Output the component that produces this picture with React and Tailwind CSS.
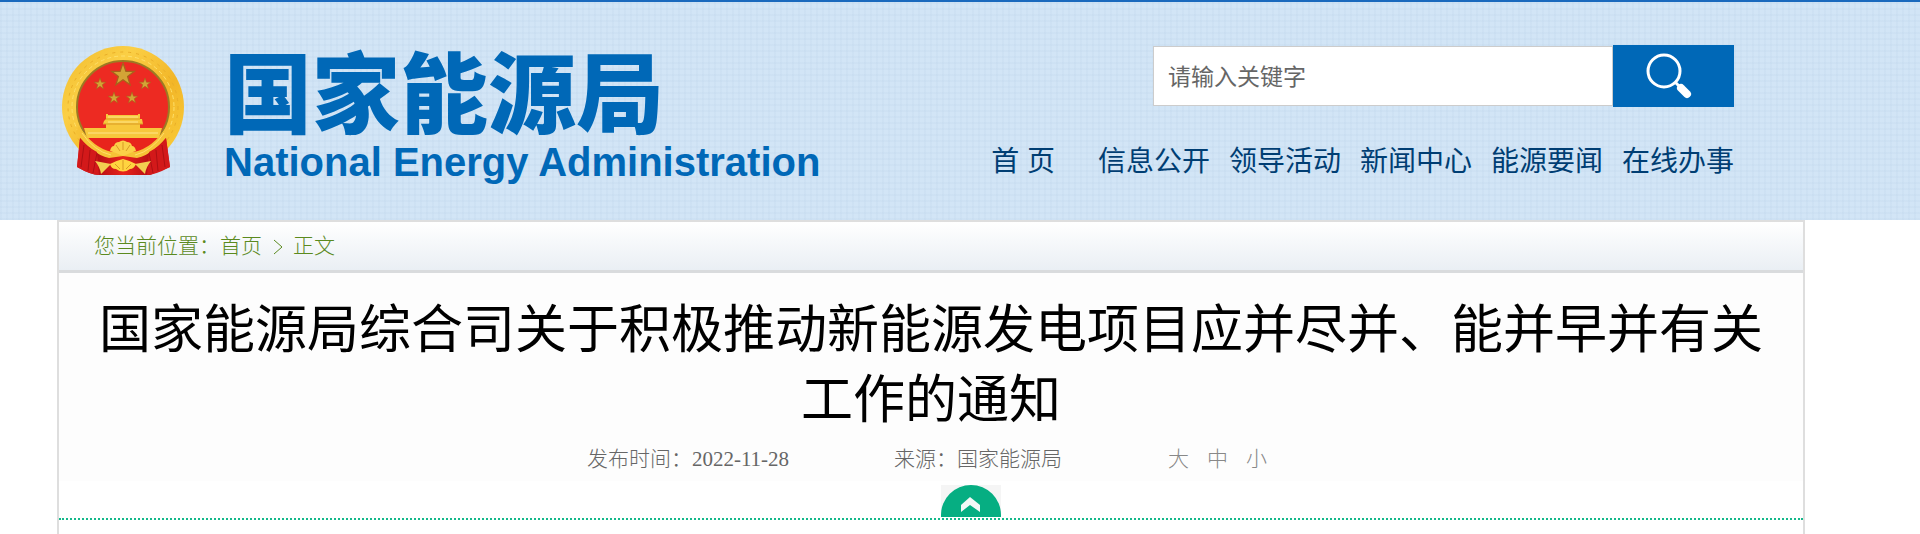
import React from 'react';

const navItems = ['信息公开', '领导活动', '新闻中心', '能源要闻', '在线办事'];
const textSizes = ['大', '中', '小'];
const smallStars = [
  { x: 38, y: 38, s: 6 },
  { x: 83, y: 38, s: 6 },
  { x: 52, y: 52, s: 6 },
  { x: 70, y: 52, s: 6 },
];

function Star({ x, y, s }) {
  return (
    <path
      transform={`translate(${x} ${y}) scale(${s})`}
      d="M0-1 .24-.31.95-.31.38.12.59.81 0 .39-.59.81-.38.12-.95-.31-.24-.31Z"
      fill="#d3a436"
      stroke="#a5641b"
      strokeWidth=".1"
    />
  );
}

function Emblem() {
  return (
    <svg viewBox="0 0 122 130" className="h-[130px] w-[122px] shrink-0" aria-hidden="true">
      <defs>
        <linearGradient id="gold" x1="0" y1="0" x2="1" y2="1">
          <stop offset="0" stopColor="#f0bb2c" />
          <stop offset=".3" stopColor="#fbcf45" />
          <stop offset=".6" stopColor="#f2b628" />
          <stop offset="1" stopColor="#fbd03c" />
        </linearGradient>
        <linearGradient id="drape" x1="0" y1="0" x2="1" y2="0">
          <stop offset="0" stopColor="#e01f1c" />
          <stop offset=".2" stopColor="#b30d12" />
          <stop offset=".5" stopColor="#e8241c" />
          <stop offset=".8" stopColor="#b30d12" />
          <stop offset="1" stopColor="#e01f1c" />
        </linearGradient>
      </defs>
      <circle cx="61" cy="61" r="61" fill="url(#gold)" />
      <circle cx="61" cy="61" r="55" fill="none" stroke="#e9ae28" strokeWidth="1" strokeDasharray="3 5" />
      <circle cx="61" cy="61" r="51" fill="none" stroke="#ffe06a" strokeWidth="1" strokeDasharray="4 3" />
      <circle cx="61" cy="61" r="46" fill="#ed2a22" stroke="#9c7a24" strokeWidth="2" />
      <Star x={61} y={29} s={12} />
      {smallStars.map((star) => (
        <Star key={star.x} {...star} />
      ))}
      <path d="M44 68h2v1h30v-1h2v5h2l1 5h-3v4h22l-3 10H25l-3-10h22v-4h-3l1-3 2-2Z" fill="#f7c83c" />
      <path d="M44 73h34M41 78h40" stroke="#d99a24" strokeWidth="1" />
      <path d="M46 71h30M46 76h30M26 87h70" stroke="#ffe58a" strokeWidth="1" />
      <path d="M25 92h72q-10 13-24 17l-12-5-12 5Q34 104 25 92Z" fill="#e8241c" />
      <path d="M18 92q12 14 31 18h24q19-4 31-18l4 29q-8 3-20 8H37q-8 0-22-8Z" fill="url(#drape)" />
      <path d="M17 80q14 22 33 26l11-1 11 1q19-4 33-26l3 6q-15 22-33 26l-14-2-14 2Q29 108 14 86Z" fill="#f6c236" />
      <path d="M20 87q12 18 29 22m53-22q-12 18-29 22" fill="none" stroke="#ffdf6a" strokeWidth="1" />
      <path d="M18 92q7 9 17 14l2 23q-8 0-22-8Zm86 0q-7 9-17 14l-2 23q8 0 23-8Z" fill="#d3191a" />
      <path d="M22 99l-3 22m9-17-2 21m9-18-4 20m69-28 3 22m-9-17 2 21m-9-18 4 20" stroke="#ad1013" strokeWidth="1" />
      <path d="M48 105q1-5 4-5 1-4 5-4 4-3 8 0 4 0 5 4 3 0 4 5l-6 2-7 3-7-3Z" fill="#fbd048" />
      <path d="M54 99l4 6m3-9v8m7-5-4 6" stroke="#d99a24" strokeWidth="1" />
      <path d="M33 115l16 3-10 10q-1-7-6-13Zm56 0-16 3 10 10q1-7 6-13Z" fill="#f2cf50" />
      <path d="M48 118q5-3 13-5 8 2 13 5-2 5-6 5-7 5-14 0-5 0-6-5Z" fill="#ffd440" />
      <path d="M53 118l5 5m3-9v10m8-6-5 5" stroke="#d99a24" strokeWidth="1" />
    </svg>
  );
}

function SearchIcon() {
  return (
    <svg viewBox="0 0 46 46" className="h-[46px] w-[46px]" fill="none" stroke="white" aria-hidden="true">
      <circle cx="18" cy="18" r="16" strokeWidth="3" />
      <path d="m29 29 4 4" strokeWidth="3" />
      <path d="m35 35 6 6" strokeWidth="8" strokeLinecap="round" />
    </svg>
  );
}

function Header() {
  return (
    <header className="flex h-[220px] justify-between border-t-2 border-[#1a69bd] bg-[#d2e5f6] bg-[repeating-linear-gradient(0deg,#b4cce426_0_2px,transparent_2px_6px),repeating-linear-gradient(90deg,#b4cce426_0_2px,transparent_2px_6px)] pr-[186px] pl-[62px]">
      <div className="flex gap-10 pt-11">
        <Emblem />
        <div className="text-[#0068b7]">
          <div className="h-[92px] text-[88px] leading-[100px] font-black">国家能源局</div>
          <div className="text-[40px] leading-12 font-bold">National Energy Administration</div>
        </div>
      </div>
      <div className="flex flex-col items-end pt-[43px]">
        <form className="flex items-center" onSubmit={(e) => e.preventDefault()}>
          <input
            type="text"
            aria-label="请输入关键字"
            placeholder="请输入关键字"
            className="h-[60px] w-[460px] border border-[#ccc] bg-white px-3.5 pt-0.5 text-[23px] outline-none placeholder:text-[#666]"
          />
          <button type="submit" aria-label="搜索" className="flex h-[62px] w-[121px] items-center justify-center bg-[#0068b7] pr-2.5">
            <SearchIcon />
          </button>
        </form>
        <nav className="mt-[31px] flex gap-[19px] text-[28px] leading-12 text-[#003e73]">
          <a href="#" className="mr-6 whitespace-pre">首 页</a>
          {navItems.map((item) => (
            <a key={item} href="#">{item}</a>
          ))}
        </nav>
      </div>
    </header>
  );
}

export default function App() {
  return (
    <div className="min-h-screen bg-white font-['Liberation_Sans','Noto_Sans_CJK_SC',sans-serif]">
      <Header />
      <main className="mr-[115px] ml-[57px] border-2 border-b-0 border-[#dedede]">
        <nav className="flex h-[51px] items-center border-b-3 border-[#d9dbdd] bg-linear-to-b from-white to-[#eaeff4] px-[35px] text-[21px] font-light text-[#5b8a1e]">
          <span>您当前位置：</span>
          <a href="#">首页</a>
          <svg viewBox="0 0 31 20" className="h-5 w-[31px]" fill="none" stroke="currentColor" aria-hidden="true">
            <path d="m12 4 8 7-8 7" />
          </svg>
          <span>正文</span>
        </nav>
        <div className="bg-[#fdfdfd] px-8 pt-[22px]">
          <h1 className="text-center text-[52px] leading-[70px] text-black">
            国家能源局综合司关于积极推动新能源发电项目应并尽并、能并早并有关工作的通知
          </h1>
          <div className="flex h-[46px] items-center justify-center pt-1 pr-2 font-['Liberation_Serif','Noto_Sans_CJK_SC',serif] text-[21px] font-light text-[#666]">
            <span className="mr-[105px]">发布时间：2022-11-28</span>
            <span className="mr-[106px]">来源：国家能源局</span>
            <div className="flex gap-[18px] text-[#888]">
              {textSizes.map((size) => (
                <button key={size} type="button">{size}</button>
              ))}
            </div>
          </div>
        </div>
        <div className="flex justify-center border-b-2 border-dotted border-[#14b88a] pt-1 pb-px pl-[79px]">
          <button type="button" aria-label="收起" className="bg-[#f5f5f5]">
            <svg viewBox="0 0 60 32" className="h-8 w-[60px]" aria-hidden="true">
              <path d="M0 32V30a30 30 0 0 1 60 0v2Z" fill="#06ae82" />
              <path d="m20 20 9-8 10 8v7l-10-7-9 7Z" fill="#f3f8f6" />
            </svg>
          </button>
        </div>
        <div className="h-[15px]" />
      </main>
    </div>
  );
}
